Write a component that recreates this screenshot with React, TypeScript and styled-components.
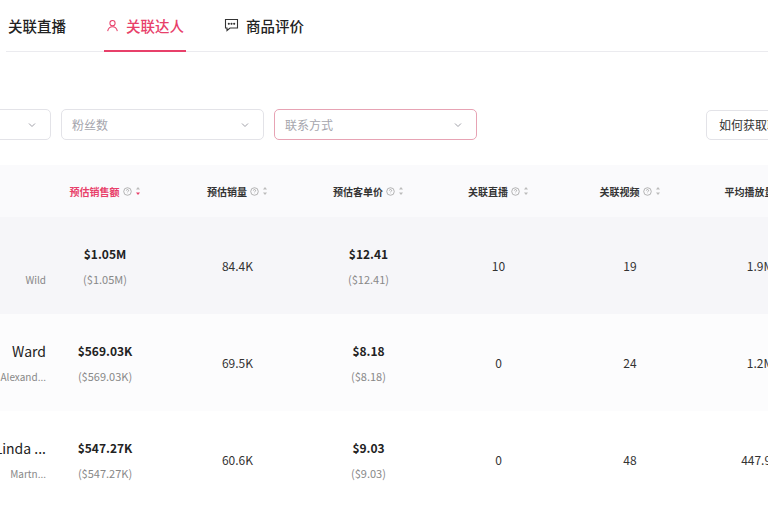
import React from 'react';
import styled, { createGlobalStyle } from 'styled-components';

const GlobalStyle = createGlobalStyle`
  body {
    margin: 0;
    background: #fff;
    font-family: "Noto Sans CJK SC", "Noto Sans", sans-serif;
    color: #222;
    overflow: hidden;
  }
`;

const Page = styled.div`
  width: 768px;
  height: 510px;
  overflow: hidden;
`;

const TabBar = styled.div`
  display: flex;
  height: 51px;
  border-bottom: 1px solid #ebebef;
  margin-left: 6px;
  gap: 36px;
`;

const Tab = styled.div<{ $active?: boolean }>`
  display: flex;
  align-items: center;
  gap: 7px;
  font-size: 14.5px;
  font-weight: 500;
  color: ${(p) => (p.$active ? '#e8406a' : '#222')};
  border-bottom: 2px solid ${(p) => (p.$active ? '#e8406a' : 'transparent')};
  margin-bottom: -1px;
  padding: 0 2px;
`;

const Filters = styled.div`
  display: flex;
  align-items: center;
  margin: 57px 0 0 -152px;
  gap: 10px;
`;

const Select = styled.div<{ $focus?: boolean }>`
  width: 203px;
  height: 31px;
  box-sizing: border-box;
  border: 1px solid ${(p) => (p.$focus ? '#e7a3b4' : '#e3e3e8')};
  border-radius: 5px;
  display: flex;
  align-items: center;
  justify-content: space-between;
  padding: 0 12px 0 10px;
  font-size: 12px;
  color: #a5a5ad;
`;

const HowButton = styled.div`
  margin-left: auto;
  margin-right: -60px;
  height: 28px;
  border: 1px solid #e3e3e8;
  border-radius: 5px;
  padding: 0 12px;
  display: flex;
  align-items: center;
  font-size: 12px;
  color: #333;
  white-space: nowrap;
`;

const Table = styled.div`
  margin: 25px 0 0 -160px;
`;

const Row = styled.div<{ $bg: string; $h: number }>`
  display: grid;
  grid-template-columns: 200px 130px 135px 127px 133px 130px 130px;
  height: ${(p) => p.$h}px;
  background: ${(p) => p.$bg};
  align-items: center;
`;

const HeadCell = styled.div<{ $active?: boolean }>`
  display: flex;
  align-items: center;
  justify-content: center;
  gap: 3px;
  font-size: 10px;
  font-weight: 600;
  color: ${(p) => (p.$active ? '#e8406a' : '#333')};
  white-space: nowrap;
`;

const NameCell = styled.div`
  display: flex;
  flex-direction: column;
  align-items: flex-end;
  gap: 8px;
  margin-right: -6px;
`;

const NameMain = styled.div`
  font-size: 14px;
  color: #222;
  white-space: nowrap;
`;

const NameSub = styled.div`
  font-size: 10px;
  color: #888;
  white-space: nowrap;
`;

const MoneyCell = styled.div`
  display: flex;
  flex-direction: column;
  align-items: center;
  gap: 9px;
`;

const Money = styled.div`
  font-size: 12px;
  font-weight: 700;
  color: #222;
`;

const MoneySub = styled.div`
  font-size: 11px;
  color: #888;
`;

const Plain = styled.div`
  text-align: center;
  font-size: 12px;
  color: #333;
`;

const Chevron = () => (
  <svg width="12" height="12" viewBox="0 0 12 12" fill="none" stroke="#a0a0a8" strokeWidth="1">
    <path d="M3 4.5l3 3 3-3" />
  </svg>
);

const Help = () => (
  <svg width="9" height="9" viewBox="0 0 10 10" fill="none" stroke="#999" strokeWidth="0.8">
    <circle cx="5" cy="5" r="4.2" />
    <path d="M3.8 4a1.2 1.2 0 1 1 1.6 1.1c-.3.1-.4.4-.4.7M5 7.2v.2" />
  </svg>
);

const Sort = ({ active }: { active?: boolean }) => (
  <svg width="6" height="10" viewBox="0 0 6 10">
    <path d="M3 1l2 2.5H1z" fill="#bbb" />
    <path d="M3 9L1 6.5h4z" fill={active ? '#e8406a' : '#bbb'} />
  </svg>
);

const heads = ['预估销售额', '预估销量', '预估客单价', '关联直播', '关联视频', '平均播放量'];

const rows = [
  { name: '', sub: 'Wild', sales: '$1.05M', units: '84.4K', price: '$12.41', live: '10', video: '19', avg: '1.9M', bg: '#f6f6f9' },
  { name: 'Ward', sub: 'Alexand...', sales: '$569.03K', units: '69.5K', price: '$8.18', live: '0', video: '24', avg: '1.2M', bg: '#fcfcfd' },
  { name: 'Linda ...', sub: 'Martn...', sales: '$547.27K', units: '60.6K', price: '$9.03', live: '0', video: '48', avg: '447.9K', bg: '#fff' },
];

export default function App() {
  return (
    <Page>
      <GlobalStyle />
      <TabBar>
        <Tab>关联直播</Tab>
        <Tab $active>
          <svg width="13" height="13" viewBox="0 0 14 14" fill="none" stroke="#e8406a" strokeWidth="1.1">
            <circle cx="7" cy="4.5" r="2.8" />
            <path d="M1.8 13c.6-3 2.6-4.6 5.2-4.6s4.6 1.6 5.2 4.6" />
          </svg>
          关联达人
        </Tab>
        <Tab>
          <svg width="15" height="14" viewBox="0 0 15 14" fill="none" stroke="#333" strokeWidth="1.1">
            <path d="M1.5 1.5h12v8.5H6l-3 2.5V10H1.5z" />
            <circle cx="4.8" cy="5.8" r=".5" fill="#333" />
            <circle cx="7.5" cy="5.8" r=".5" fill="#333" />
            <circle cx="10.2" cy="5.8" r=".5" fill="#333" />
          </svg>
          商品评价
        </Tab>
      </TabBar>
      <Filters>
        <Select>
          <span>达人类型</span>
          <Chevron />
        </Select>
        <Select>
          <span>粉丝数</span>
          <Chevron />
        </Select>
        <Select $focus>
          <span>联系方式</span>
          <Chevron />
        </Select>
        <HowButton>如何获取联系方式</HowButton>
      </Filters>
      <Table>
        <Row $bg="#fafafc" $h={52}>
          <HeadCell>达人</HeadCell>
          {heads.map((h, i) => (
            <HeadCell key={h} $active={i === 0}>
              {h}
              <Help />
              <Sort active={i === 0} />
            </HeadCell>
          ))}
        </Row>
        {rows.map((r) => (
          <Row key={r.sales} $bg={r.bg} $h={97}>
            <NameCell>
              <NameMain>{r.name || '\u00a0'}</NameMain>
              <NameSub>{r.sub}</NameSub>
            </NameCell>
            <MoneyCell>
              <Money>{r.sales}</Money>
              <MoneySub>({r.sales})</MoneySub>
            </MoneyCell>
            <Plain>{r.units}</Plain>
            <MoneyCell>
              <Money>{r.price}</Money>
              <MoneySub>({r.price})</MoneySub>
            </MoneyCell>
            <Plain>{r.live}</Plain>
            <Plain>{r.video}</Plain>
            <Plain>{r.avg}</Plain>
          </Row>
        ))}
      </Table>
    </Page>
  );
}
